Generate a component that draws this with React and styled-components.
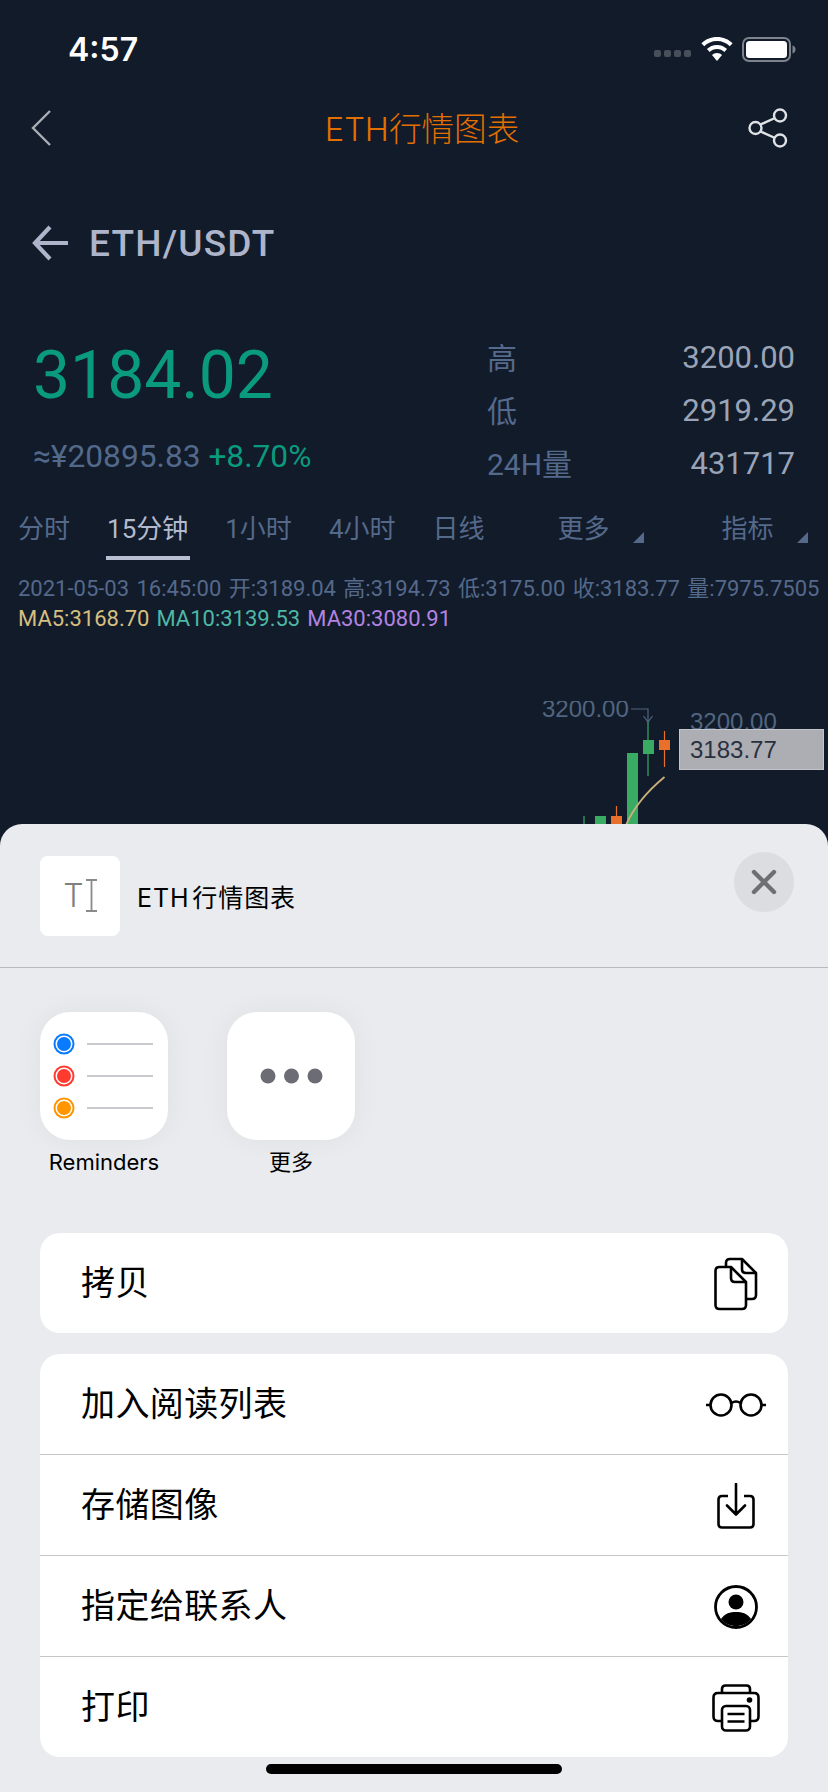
import React from "react"
import styled, { createGlobalStyle } from "styled-components"

const GlobalStyle = createGlobalStyle`
    html, body {
        margin: 0;
        padding: 0;
        background: #111b2a;
    }
`;

const cjk = `"Noto Sans CJK SC"`;
const appFont = `Roboto, ${cjk}, sans-serif`;
const sheetFont = `Inter, ${cjk}, sans-serif`;

const stats = [
    { label: "高", value: "3200.00" },
    { label: "低", value: "2919.29" },
    { label: "24H量", value: "431717" },
];

const periods = ["分时", "15分钟", "1小时", "4小时", "日线"];

const ChevronIcon = () => (
    <svg width="22" height="38" viewBox="0 0 22 38">
        <path d="M20 2 L3 19 L20 36" fill="none" stroke="#a9adb3" strokeWidth="2.4" />
    </svg>
);

const ShareIcon = () => (
    <svg width="40" height="40" viewBox="0 0 40 40" fill="none" stroke="#dfe2e6" strokeWidth="2.4">
        <circle cx="7.5" cy="20" r="6" />
        <circle cx="32" cy="7.5" r="6" />
        <circle cx="32" cy="32.5" r="6" />
        <path d="M12.5 16.5 L27 10 M12.5 23.5 L27 30" />
    </svg>
);

const ArrowIcon = () => (
    <svg width="38" height="36" viewBox="0 0 38 36" fill="none" stroke="#aeb4c9" strokeWidth="4.2">
        <path d="M36 18 H4 M18 2 L3 18 L18 34" />
    </svg>
);

const WifiIcon = () => (
    <svg width="32" height="24" viewBox="0 0 32 24" fill="#fff">
        <path d="M16 0C9.8 0 4.3 2.4 0.4 6.3L3.2 9.2C6.5 5.9 11 3.9 16 3.9s9.5 2 12.8 5.3l2.8-2.9C27.7 2.4 22.2 0 16 0z" />
        <path d="M16 8C12 8 8.500 9.600 5.900 12.100L8.700 15C10.600 13.200 13.100 12 16 12s5.400 1.200 7.300 3l2.800-2.900C23.500 9.600 20 8 16 8z" />
        <path d="M16 16c-2 0-3.800.8-5 2l5 6 5-6c-1.200-1.200-3-2-5-2z" />
    </svg>
);

const BatteryIcon = () => (
    <svg width="54" height="25" viewBox="0 0 54 25">
        <rect x="1" y="1" width="47" height="23" rx="6" fill="none" stroke="#7d828b" strokeWidth="2" />
        <rect x="4" y="4" width="41" height="17" rx="3.500" fill="#fff" />
        <path d="M50.500 8.500 C52.500 9 53.500 10.500 53.500 12.500 C53.500 14.500 52.500 16 50.500 16.500 Z" fill="#7d828b" />
    </svg>
);

const CaretIcon = () => (
    <svg width="11" height="33" viewBox="0 0 11 33" fill="none" stroke="#8a8a8a" strokeWidth="1.800">
        <path d="M0 1 H11 M0 32 H11 M5.500 1 V32" />
    </svg>
);

const CloseIcon = () => (
    <svg width="26" height="26" viewBox="0 0 26 26" fill="none" stroke="#6e6e73" strokeWidth="4.400" strokeLinecap="round">
        <path d="M3 3 L23 23 M23 3 L3 23" />
    </svg>
);

const RemindersIcon = () => (
    <svg width="128" height="128" viewBox="0 0 128 128">
        {[["#0a7aff", 32], ["#ff3b30", 64], ["#ff9500", 96]].map(([color, y]) => (
            <g key={color}>
                <circle cx="24" cy={y} r="9.500" fill="#fff" stroke={color} strokeWidth="2" />
                <circle cx="24" cy={y} r="7" fill={color} />
                <path d={`M47 ${y} H113`} stroke="#c9c9ce" strokeWidth="2" />
            </g>
        ))}
    </svg>
);

const DotsIcon = () => (
    <svg width="63" height="16" viewBox="0 0 63 16" fill="#6c6c75">
        <circle cx="8" cy="8" r="7.500" />
        <circle cx="31.500" cy="8" r="7.500" />
        <circle cx="55" cy="8" r="7.500" />
    </svg>
);

const CopyIcon = () => (
    <svg width="44" height="54" viewBox="0 0 44 54" fill="none" stroke="#000" strokeWidth="2.600" strokeLinejoin="round">
        <path d="M12 10 V6 Q12 2 16 2 H28 L42 16 V38 Q42 42 38 42 H32" />
        <path d="M28 2 V12 Q28 16 32 16 H42" />
        <path d="M1.500 14 Q1.500 10 5.500 10 H17 L32 25 V48 Q32 52 28 52 H5.500 Q1.500 52 1.500 48 Z" fill="#fff" />
        <path d="M17 10 V21 Q17 25 21 25 H32" />
    </svg>
);

const GlassesIcon = () => (
    <svg width="60" height="24" viewBox="0 0 60 24" fill="none" stroke="#000" strokeWidth="2.600">
        <circle cx="15" cy="12" r="10.500" />
        <circle cx="45" cy="12" r="10.500" />
        <path d="M25.500 10 Q30 7 34.500 10 M0 12 H4.500 M55.500 12 H60" />
    </svg>
);

const SaveIcon = () => (
    <svg width="38" height="46" viewBox="0 0 38 46" fill="none" stroke="#000" strokeWidth="2.600" strokeLinejoin="round">
        <path d="M11 13 H5 Q1.500 13 1.500 16.500 V41 Q1.500 44.500 5 44.500 H33 Q36.500 44.500 36.500 41 V16.500 Q36.500 13 33 13 H27" />
        <path d="M19 1 V31 M10 22.500 L19 31.500 L28 22.500" strokeLinecap="round" />
    </svg>
);

const ContactIcon = () => (
    <svg width="44" height="44" viewBox="0 0 44 44">
        <circle cx="22" cy="22" r="20.500" fill="none" stroke="#000" strokeWidth="2.800" />
        <circle cx="22" cy="17" r="7.500" fill="#000" />
        <path d="M7 34 C11 28 16 27 22 27 C28 27 33 28 37 34 C33 39 27.500 41 22 41 C16.500 41 11 39 7 34 Z" fill="#000" />
    </svg>
);

const PrinterIcon = () => (
    <svg width="48" height="48" viewBox="0 0 48 48" fill="none" stroke="#000" strokeWidth="2.600" strokeLinejoin="round">
        <path d="M10 9 V5 Q10 1.500 13.500 1.500 H34.500 Q38 1.500 38 5 V9" />
        <path d="M10 37 H6 Q1.500 37 1.500 32.500 V13.500 Q1.500 9 6 9 H42 Q46.500 9 46.500 13.500 V32.500 Q46.500 37 42 37 H38" />
        <rect x="10" y="22" width="28" height="24.500" rx="4" fill="#fff" />
        <path d="M15.500 30 H32.500 M15.500 37.500 H32.500" />
        <circle cx="37.500" cy="16" r="2.800" fill="#000" stroke="none" />
    </svg>
);

const ChartDrawing = () => (
    <ChartSvg viewBox="0 0 828 140" width="828" height="140">
        <text x="542" y="16" fontFamily="Liberation Sans, sans-serif" fontSize="24" fill="#51657f">3200.00</text>
        <text x="690" y="29" fontFamily="Liberation Sans, sans-serif" fontSize="24" fill="#51657f">3200.00</text>
        <path d="M631 8 H648 V20 M643.500 15 L648 21 L652.500 15" fill="none" stroke="#51657f" strokeWidth="1.200" />
        <path d="M568 123 V140" stroke="#3aab63" strokeWidth="1.200" />
        <path d="M584 115 V140" stroke="#3aab63" strokeWidth="1.200" />
        <rect x="595" y="115" width="11" height="25" fill="#3aab63" />
        <path d="M616.500 105 V140" stroke="#e8702a" strokeWidth="1.200" />
        <rect x="611" y="115" width="11" height="25" fill="#e8702a" />
        <rect x="627" y="52" width="11" height="88" fill="#3aab63" />
        <path d="M648 21 V75" stroke="#3aab63" strokeWidth="1.200" />
        <rect x="643" y="39" width="11" height="14" fill="#3aab63" />
        <path d="M664.500 30 V66" stroke="#e8702a" strokeWidth="1.200" />
        <rect x="659" y="39" width="11" height="10" fill="#e8702a" />
        <path d="M626 124 C634 106 645 92 664.500 76" fill="none" stroke="#c8b27a" strokeWidth="1.800" />
    </ChartSvg>
);

const App = () => {
    return (
        <>
            <GlobalStyle />
            <Screen>
                <StatusBar>
                    <Clock>4:57</Clock>
                    <StatusIcons>
                        <SignalDots>
                            <i /><i /><i /><i />
                        </SignalDots>
                        <WifiIcon />
                        <BatteryIcon />
                    </StatusIcons>
                </StatusBar>

                <NavBar>
                    <ChevronIcon />
                    <NavTitle>ETH行情图表</NavTitle>
                    <ShareIcon />
                </NavBar>

                <PairRow>
                    <ArrowIcon />
                    <PairName>ETH/USDT</PairName>
                </PairRow>

                <Quote>
                    <div>
                        <Price>3184.02</Price>
                        <Converted>≈¥20895.83 <Change>+8.70%</Change></Converted>
                    </div>
                    <Stats>
                        {stats.map(s => (
                            <StatRow key={s.label}>
                                <StatLabel>{s.label}</StatLabel>
                                <StatValue>{s.value}</StatValue>
                            </StatRow>
                        ))}
                    </Stats>
                </Quote>

                <Tabs>
                    {periods.map(p => (
                        <Tab key={p} $active={p === "15分钟"}>{p}</Tab>
                    ))}
                    <Tab $push="36px" $menu>更多</Tab>
                    <Tab $push="75px" $menu>指标</Tab>
                </Tabs>

                <InfoLine>2021-05-03 16:45:00 开:3189.04 高:3194.73 低:3175.00 收:3183.77 量:7975.7505</InfoLine>
                <MaLine>
                    <MaValue $color="#d6bf80">MA5:3168.70</MaValue>
                    <MaValue $color="#4fb8a4">MA10:3139.53</MaValue>
                    <MaValue $color="#b283e0">MA30:3080.91</MaValue>
                </MaLine>

                <Chart>
                    <ChartDrawing />
                    <PriceTag>3183.77</PriceTag>
                </Chart>

                <Sheet>
                    <SheetHeader>
                        <PreviewTile>
                            <PreviewT>T</PreviewT>
                            <CaretIcon />
                        </PreviewTile>
                        <SheetTitle>ETH 行情图表</SheetTitle>
                        <CloseButton><CloseIcon /></CloseButton>
                    </SheetHeader>

                    <Apps>
                        <AppItem>
                            <AppTile><RemindersIcon /></AppTile>
                            <AppLabel>Reminders</AppLabel>
                        </AppItem>
                        <AppItem>
                            <AppTile><DotsIcon /></AppTile>
                            <AppLabel>更多</AppLabel>
                        </AppItem>
                    </Apps>

                    <ActionCard>
                        <ActionRow><ActionLabel>拷贝</ActionLabel><ActionIcon><CopyIcon /></ActionIcon></ActionRow>
                    </ActionCard>
                    <ActionCard>
                        <ActionRow><ActionLabel>加入阅读列表</ActionLabel><ActionIcon><GlassesIcon /></ActionIcon></ActionRow>
                        <ActionRow><ActionLabel>存储图像</ActionLabel><ActionIcon><SaveIcon /></ActionIcon></ActionRow>
                        <ActionRow><ActionLabel>指定给联系人</ActionLabel><ActionIcon><ContactIcon /></ActionIcon></ActionRow>
                        <ActionRow><ActionLabel>打印</ActionLabel><ActionIcon><PrinterIcon /></ActionIcon></ActionRow>
                    </ActionCard>

                    <HomeBar />
                </Sheet>
            </Screen>
        </>
    )
}

const Screen = styled.div`
    position: relative;
    width: 828px;
    height: 1792px;
    overflow: hidden;
    background: #111b2a;
    font-family: ${appFont};
`;

const StatusBar = styled.div`
    display: flex;
    justify-content: space-between;
    align-items: center;
    height: 98px;
    padding: 0 32px 0 68px;
    box-sizing: border-box;
`;

const Clock = styled.span`
    color: #fff;
    font-size: 32px;
    font-weight: 600;
    font-family: Inter, sans-serif;
`;

const StatusIcons = styled.div`
    display: flex;
    align-items: center;
    gap: 9px;
`;

const SignalDots = styled.div`
    display: flex;
    gap: 3px;
    align-self: flex-end;
    margin: 0 1px 5px 0;
    i {
        width: 7px;
        height: 7px;
        border-radius: 2px;
        background: #474f5b;
    }
`;

const NavBar = styled.div`
    display: flex;
    justify-content: space-between;
    align-items: center;
    height: 60px;
    padding: 0 40px 0 30px;
`;

const NavTitle = styled.div`
    margin: -4px 0 0 44px;
    color: #e36f00;
    font-size: 32.600px;
    font-family: ${sheetFont};
    font-weight: 300;
`;

const PairRow = styled.div`
    display: flex;
    align-items: center;
    gap: 19px;
    height: 40px;
    margin-top: 65px;
    padding-left: 32px;
`;

const PairName = styled.div`
    color: #aeb4c9;
    font-size: 37px;
    font-weight: 500;
    letter-spacing: 1.200px;
`;

const Quote = styled.div`
    display: flex;
    justify-content: space-between;
    margin-top: 74px;
    padding: 0 33px;
`;

const Price = styled.div`
    color: #0a9a7d;
    font-size: 66px;
    line-height: 78px;
`;

const Converted = styled.div`
    margin-top: 24px;
    color: #53698a;
    font-size: 31.700px;
    line-height: 36px;
`;

const Change = styled.span`
    color: #0a9a7d;
`;

const Stats = styled.div`
    display: flex;
    flex-direction: column;
    width: 308px;
    gap: 13px;
    margin-top: -1px;
`;

const StatRow = styled.div`
    display: flex;
    justify-content: space-between;
    align-items: center;
    height: 40px;
`;

const StatLabel = styled.span`
    color: #55698a;
    font-size: 30px;
`;

const StatValue = styled.span`
    margin-top: 3px;
    color: #9aa4b8;
    font-size: 31px;
`;

const Tabs = styled.div`
    display: flex;
    gap: 37px;
    margin-top: 24px;
    padding-left: 18px;
`;

const Tab = styled.div`
    position: relative;
    height: 50px;
    line-height: 46px;
    font-size: 26px;
    color: ${p => (p.$active ? "#b4bace" : "#55698a")};
    border-bottom: 4px solid ${p => (p.$active ? "#b9bfd2" : "transparent")};
    margin-left: ${p => p.$push || "0"};
    ${p => p.$active && "padding: 0 1.5px; margin: 0 -1.5px;"}

    &::after {
        content: "";
        display: ${p => (p.$menu ? "block" : "none")};
        position: absolute;
        right: -34px;
        bottom: 13px;
        border-style: solid;
        border-width: 0 0 11px 11px;
        border-color: transparent transparent #55698a transparent;
    }
`;

const InfoLine = styled.div`
    margin-top: 14px;
    padding-left: 18px;
    color: #55698a;
    font-size: 22px;
    line-height: 30px;
    word-spacing: 1.900px;
    white-space: nowrap;
`;

const MaLine = styled.div`
    display: flex;
    gap: 7px;
    padding-left: 18px;
    font-size: 22px;
    line-height: 30px;
`;

const MaValue = styled.span`
    color: ${p => p.$color};
`;

const Chart = styled.div`
    position: relative;
    height: 140px;
    margin-top: 67px;
`;

const ChartSvg = styled.svg`
    display: block;
`;

const PriceTag = styled.div`
    position: absolute;
    left: 679px;
    top: 28px;
    width: 145px;
    height: 41px;
    box-sizing: border-box;
    padding-left: 10px;
    background: #acaeb3;
    border: 1px solid #c3c5c9;
    color: #2a3040;
    font-family: "Liberation Sans", sans-serif;
    font-size: 24px;
    line-height: 39px;
`;

const Sheet = styled.div`
    position: absolute;
    left: 0;
    right: 0;
    bottom: 0;
    height: 968px;
    background: #e9ebef;
    border-radius: 22px 22px 0 0;
    font-family: ${sheetFont};
    color: #000;
`;

const SheetHeader = styled.div`
    display: flex;
    align-items: center;
    height: 144px;
    padding: 0 34px 0 40px;
    box-sizing: border-box;
    border-bottom: 1px solid #b9babd;
`;

const PreviewTile = styled.div`
    display: flex;
    align-items: center;
    justify-content: center;
    gap: 2px;
    width: 80px;
    height: 80px;
    background: #fff;
    border-radius: 8px;
`;

const PreviewT = styled.span`
    color: #808080;
    font-size: 32px;
    font-weight: 300;
`;

const SheetTitle = styled.div`
    flex: 1;
    margin-left: 17px;
    font-size: 25px;
    letter-spacing: 0.900px;
    word-spacing: -5px;
`;

const CloseButton = styled.div`
    display: flex;
    align-items: center;
    justify-content: center;
    width: 60px;
    height: 60px;
    margin-top: -28px;
    border-radius: 50%;
    background: #dcdde1;
`;

const Apps = styled.div`
    display: flex;
    gap: 59px;
    padding: 44px 40px 0;
    height: 221px;
`;

const AppItem = styled.div`
    display: flex;
    flex-direction: column;
    align-items: center;
    width: 128px;
`;

const AppTile = styled.div`
    display: flex;
    align-items: center;
    justify-content: center;
    width: 128px;
    height: 128px;
    background: #fff;
    border-radius: 30px;
    box-shadow: 0 0 30px rgba(0, 0, 0, 0.05);
`;

const AppLabel = styled.div`
    margin-top: 8px;
    font-size: 22px;
    line-height: 28px;
    white-space: nowrap;
`;

const ActionCard = styled.div`
    margin: 0 40px 21px;
    background: #fff;
    border-radius: 20px;
    overflow: hidden;
`;

const ActionRow = styled.div`
    display: flex;
    justify-content: space-between;
    align-items: center;
    height: 100px;
    padding: 0 22px 0 41px;
    font-size: 34px;
    letter-spacing: 0.400px;

    & + & {
        border-top: 1px solid #c6c6c9;
    }
`;

const ActionLabel = styled.span`
    margin-bottom: 5px;
`;

const ActionIcon = styled.span`
    display: flex;
    justify-content: center;
    width: 60px;
    margin-top: 2px;
`;

const HomeBar = styled.div`
    position: absolute;
    left: 266px;
    bottom: 18px;
    width: 296px;
    height: 10px;
    border-radius: 5px;
    background: #000;
`;

export default App;
